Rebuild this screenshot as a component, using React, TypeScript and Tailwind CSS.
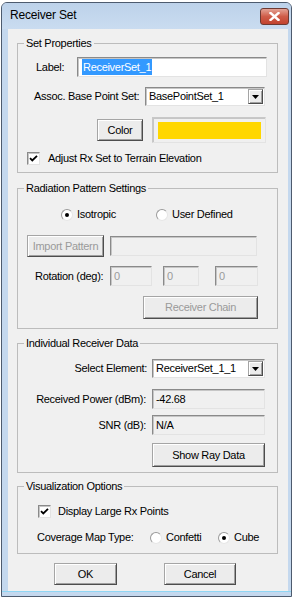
import React from "react";

const btn =
  "flex items-center justify-center border border-[#a5a5a5] border-b-[#4d4d4d] border-r-[#4d4d4d] bg-[#ececec] shadow-[inset_1px_1px_0_#ffffff,inset_-1px_-1px_0_#a0a0a0]";
const sunken =
  "border border-[#8a8a8a] border-b-[#e3e3e3] border-r-[#e3e3e3] shadow-[inset_1px_1px_0_#c6c6c6]";

function Field({ className, value, disabled }: { className: string; value?: string; disabled?: boolean }) {
  return (
    <div
      className={`flex h-[20px] items-center pl-[3px] ${sunken} ${
        disabled ? "bg-[#f0f0f0] text-[#9a9a9a]" : "bg-white text-black"
      } ${className}`}
    >
      {value}
    </div>
  );
}

function Combo({ className, value }: { className: string; value: string }) {
  return (
    <div className={`flex h-[19px] items-center bg-white ${sunken} ${className}`}>
      <span className="flex-1 pl-[3px]">{value}</span>
      <div className={`mr-[1px] h-[15px] w-[15px] ${btn}`}>
        <svg width="7" height="4" viewBox="0 0 7 4">
          <path d="M0 0h7L3.5 4z" fill="#000" />
        </svg>
      </div>
    </div>
  );
}

function Radio({ checked }: { checked?: boolean }) {
  return (
    <span className="flex h-[12px] w-[12px] shrink-0 items-center justify-center rounded-full border border-[#9a9a9a] border-b-[#e6e6e6] border-r-[#e6e6e6] bg-white">
      {checked && <span className="h-[4px] w-[4px] rounded-full bg-black" />}
    </span>
  );
}

function Check() {
  return (
    <span className={`flex h-[13px] w-[13px] shrink-0 items-center justify-center bg-white ${sunken}`}>
      <svg width="9" height="9" viewBox="0 0 9 9">
        <path d="M1 4.2l2.3 2.3L8 1.8" stroke="#000" strokeWidth="1.8" fill="none" />
      </svg>
    </span>
  );
}

function Group({ title, className, children }: { title: string; className: string; children: React.ReactNode }) {
  return (
    <fieldset className={`ml-[9px] w-[261px] border border-[#bcbcbc] ${className}`}>
      <legend className="ml-[6px] px-[2px] leading-[14px]">{title}</legend>
      {children}
    </fieldset>
  );
}

export default function App() {
  return (
    <div className="h-[600px] w-[298px] bg-white pl-[1px] pt-[2px] font-['Liberation_Sans',Arial,sans-serif] text-[11px] tracking-[-0.3px] text-black">
      <div className="flex h-[595px] w-[291px] flex-col rounded-t-[6px] border border-[#4d5b6e] bg-[#c4d8ee]">
        {/* Title bar */}
        <div className="flex h-[26px] items-start rounded-t-[5px] bg-gradient-to-b from-[#bdd2ea] to-[#cadcf0] pl-[8px]">
          <span className="mt-[5px] flex-1 text-[12px] leading-[15px] tracking-[-0.2px]">Receiver Set</span>
          <div className="mr-[2px] mt-[5px] flex h-[17px] w-[29px] items-center justify-center rounded-[3px] border border-[#6d3a33] bg-gradient-to-b from-[#e3a295] via-[#cf5c48] to-[#c2432f]">
            <svg width="11" height="9" viewBox="0 0 11 9">
              <path d="M1.5 1l8 7M9.5 1l-8 7" stroke="#fff" strokeWidth="2.4" strokeLinecap="square" />
            </svg>
          </div>
        </div>

        {/* Client area */}
        <div className="ml-[6px] flex h-[562px] w-[280px] flex-col bg-[#f0f0f0] pt-[7px]">
          <Group title="Set Properties" className="pb-[7px]">
            <div className="mt-[7px] flex h-[20px] items-center">
              <span className="ml-[18px] w-[41px]">Label:</span>
              <div className={`flex h-[20px] w-[190px] items-center bg-white pl-[4px] ${sunken}`}>
                <span className="bg-[#3399ff] px-[1px] text-white">ReceiverSet_1</span>
              </div>
            </div>
            <div className="mt-[10px] flex h-[19px] items-center">
              <span className="ml-[16px] w-[111px]">Assoc. Base Point Set:</span>
              <Combo className="w-[120px]" value="BasePointSet_1" />
            </div>
            <div className="mt-[11px] flex h-[26px] items-center">
              <div className={`ml-[79px] h-[22px] w-[46px] ${btn}`}>Color</div>
              <div className={`ml-[9px] flex h-[26px] w-[114px] items-center justify-center ${sunken} border-[#c8c8c8] bg-[#f0f0f0]`}>
                <div className="h-[17px] w-[103px] bg-[#ffd700]" />
              </div>
            </div>
            <div className="mt-[9px] flex h-[13px] items-center">
              <span className="ml-[9px]">
                <Check />
              </span>
              <span className="ml-[8px]">Adjust Rx Set to Terrain Elevation</span>
            </div>
          </Group>

          <Group title="Radiation Pattern Settings" className="mt-[8px] pb-[9px]">
            <div className="mt-[13px] flex h-[13px] items-center">
              <span className="ml-[43px]">
                <Radio checked />
              </span>
              <span className="ml-[4px] w-[79px]">Isotropic</span>
              <Radio />
              <span className="ml-[4px]">User Defined</span>
            </div>
            <div className="mt-[14px] flex h-[22px] items-center">
              <div className={`ml-[9px] h-[22px] w-[77px] text-[#9a9a9a] ${btn}`}>Import Pattern</div>
              <Field className="ml-[6px] w-[147px]" disabled />
            </div>
            <div className="mt-[9px] flex h-[20px] items-center">
              <span className="ml-[17px] w-[75px]">Rotation (deg):</span>
              <Field className="w-[42px]" value="0" disabled />
              <Field className="ml-[11px] w-[36px]" value="0" disabled />
              <Field className="ml-[16px] w-[43px]" value="0" disabled />
            </div>
            <div className={`ml-[125px] mt-[10px] h-[23px] w-[115px] text-[#9a9a9a] ${btn}`}>Receiver Chain</div>
          </Group>

          <Group title="Individual Receiver Data" className="mt-[7px] pb-[5px]">
            <div className="mt-[9px] flex h-[19px] items-center">
              <span className="w-[134px] pr-[5px] text-right">Select Element:</span>
              <Combo className="w-[113px]" value="ReceiverSet_1_1" />
            </div>
            <div className="mt-[11px] flex h-[20px] items-center">
              <span className="w-[134px] pr-[6px] text-right">Received Power (dBm):</span>
              <Field className="w-[113px] !bg-[#f0f0f0] !text-black" value="-42.68" />
            </div>
            <div className="mt-[6px] flex h-[20px] items-center">
              <span className="w-[134px] pr-[6px] text-right">SNR (dB):</span>
              <Field className="w-[113px] !bg-[#f0f0f0] !text-black" value="N/A" />
            </div>
            <div className={`ml-[134px] mt-[8px] h-[24px] w-[113px] ${btn}`}>Show Ray Data</div>
          </Group>

          <Group title="Visualization Options" className="mt-[6px] pb-[9px]">
            <div className="mt-[12px] flex h-[13px] items-center">
              <span className="ml-[20px]">
                <Check />
              </span>
              <span className="ml-[7px]">Display Large Rx Points</span>
            </div>
            <div className="mt-[13px] flex h-[13px] items-center">
              <span className="ml-[19px] w-[113px]">Coverage Map Type:</span>
              <Radio />
              <span className="ml-[4px] w-[52px]">Confetti</span>
              <Radio checked />
              <span className="ml-[4px]">Cube</span>
            </div>
          </Group>

          <div className="mt-[9px] flex h-[22px] items-center">
            <div className={`ml-[46px] h-[22px] w-[63px] ${btn}`}>OK</div>
            <div className={`ml-[47px] h-[22px] w-[72px] ${btn}`}>Cancel</div>
          </div>
        </div>
        <div className="h-[1px] w-full bg-[#8fd6f4]" />
      </div>
    </div>
  );
}
